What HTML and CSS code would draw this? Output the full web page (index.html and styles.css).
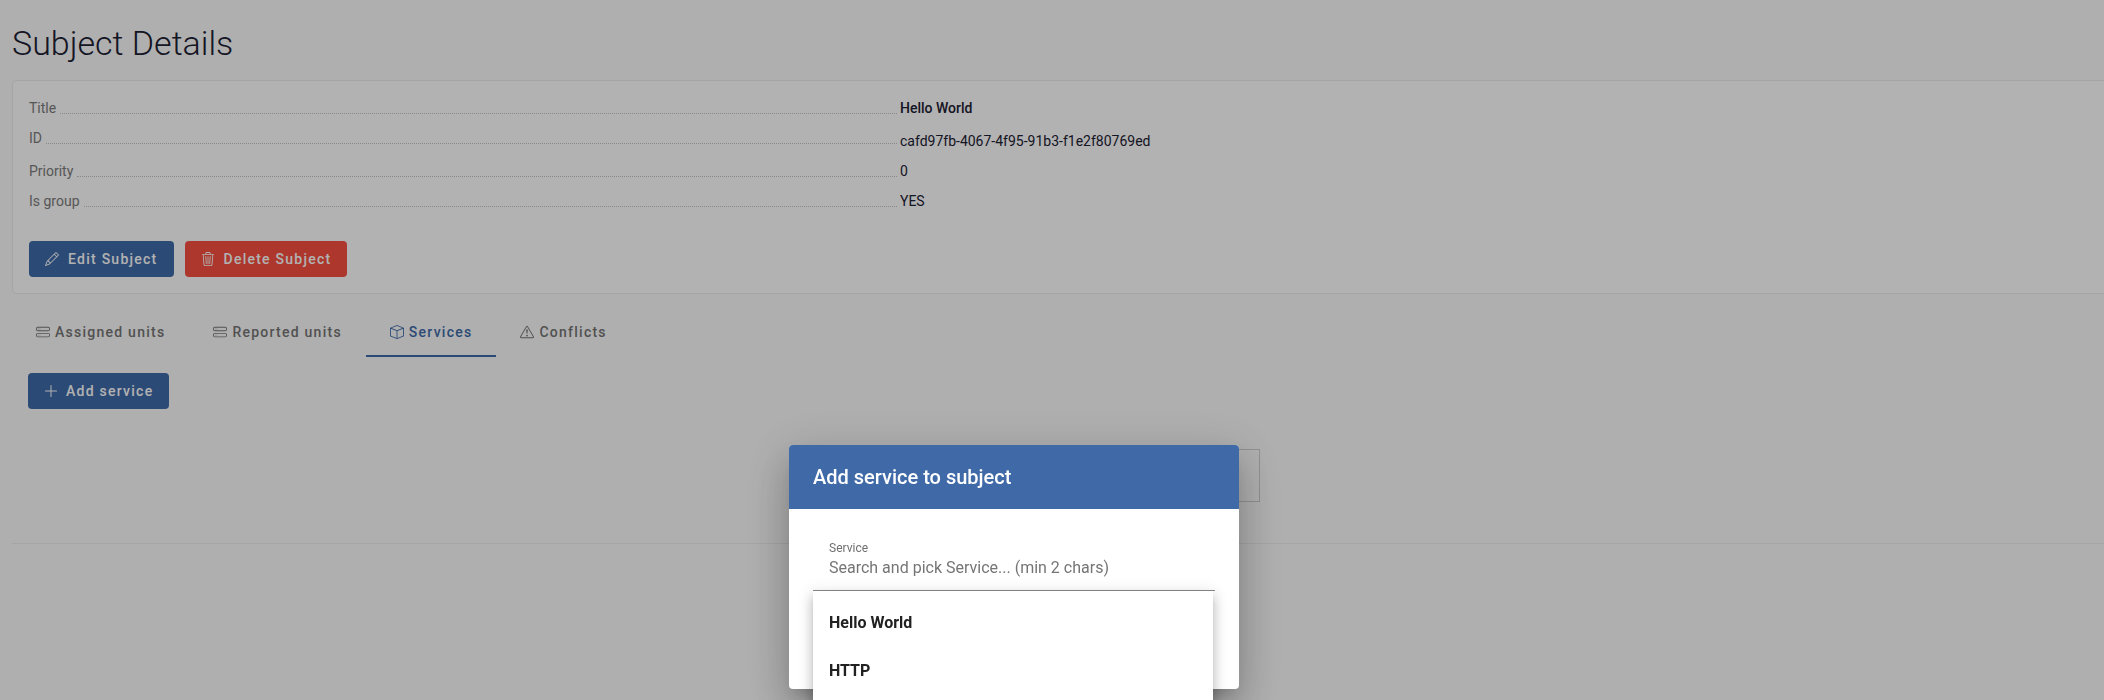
FILE: index.html
```html
<!DOCTYPE html>
<html lang="en">
<head>
<meta charset="utf-8">
<title>Subject Details</title>
<link rel="stylesheet" href="styles.css">
</head>
<body>
<main class="page">
  <h1 class="page-title">Subject Details</h1>
  <section class="card">
    <div class="row"><div class="label"><span>Title</span><i class="leader"></i></div><div class="value strong">Hello World</div></div>
    <div class="row row-tall"><div class="label"><span>ID</span><i class="leader"></i></div><div class="value value-low">cafd97fb-4067-4f95-91b3-f1e2f80769ed</div></div>
    <div class="row"><div class="label"><span>Priority</span><i class="leader"></i></div><div class="value">0</div></div>
    <div class="row"><div class="label"><span>Is group</span><i class="leader"></i></div><div class="value">YES</div></div>
    <div class="actions">
      <button class="btn btn-blue"><svg class="ico" viewBox="0 0 16 16"><path d="M12.146.146a.5.5 0 0 1 .708 0l3 3a.5.5 0 0 1 0 .708l-10 10a.5.5 0 0 1-.168.11l-5 2a.5.5 0 0 1-.65-.65l2-5a.5.5 0 0 1 .11-.168l10-10zM11.207 2.5 13.5 4.793 14.793 3.5 12.5 1.207 11.207 2.5zm1.586 3L10.5 3.207 4 9.707V10h.5a.5.5 0 0 1 .5.5v.5h.5a.5.5 0 0 1 .5.5v.5h.293l6.5-6.5zm-9.761 5.175-.106.106-1.528 3.821 3.821-1.528.106-.106A.5.5 0 0 1 5 12.5V12h-.5a.5.5 0 0 1-.5-.5V11h-.5a.5.5 0 0 1-.468-.325z"/></svg>Edit Subject</button>
      <button class="btn btn-red"><svg class="ico" viewBox="0 0 16 16"><path d="M6.5 1h3a.5.5 0 0 1 .5.5v1H6v-1a.5.5 0 0 1 .5-.5ZM11 2.5v-1A1.5 1.5 0 0 0 9.5 0h-3A1.5 1.5 0 0 0 5 1.5v1H2.506a.58.58 0 0 0-.01 0H1.5a.5.5 0 0 0 0 1h.538l.853 10.66A2 2 0 0 0 4.885 16h6.23a2 2 0 0 0 1.994-1.84l.853-10.66h.538a.5.5 0 0 0 0-1h-.995a.59.59 0 0 0-.01 0H11Zm1.958 1-.846 10.58a1 1 0 0 1-.997.92h-6.23a1 1 0 0 1-.997-.92L3.042 3.5h9.916Zm-7.487 1a.5.5 0 0 1 .528.47l.5 8.5a.5.5 0 0 1-.998.06L5 5.03a.5.5 0 0 1 .47-.53Zm5.058 0a.5.5 0 0 1 .47.53l-.5 8.5a.5.5 0 1 1-.998-.06l.5-8.5a.5.5 0 0 1 .528-.47ZM8 4.5a.5.5 0 0 1 .5.5v8.5a.5.5 0 0 1-1 0V5a.5.5 0 0 1 .5-.5Z"/></svg>Delete Subject</button>
    </div>
  </section>
  <nav class="tabs">
    <a class="tab"><svg class="ico ico-tab" viewBox="0 0 16 16"><path d="M14 10a1 1 0 0 1 1 1v1a1 1 0 0 1-1 1H2a1 1 0 0 1-1-1v-1a1 1 0 0 1 1-1h12zM2 9a2 2 0 0 0-2 2v1a2 2 0 0 0 2 2h12a2 2 0 0 0 2-2v-1a2 2 0 0 0-2-2H2z"/><path d="M5 11.5a.5.5 0 1 1-1 0 .5.5 0 0 1 1 0zm-2 0a.5.5 0 1 1-1 0 .5.5 0 0 1 1 0zM14 3a1 1 0 0 1 1 1v1a1 1 0 0 1-1 1H2a1 1 0 0 1-1-1V4a1 1 0 0 1 1-1h12zM2 2a2 2 0 0 0-2 2v1a2 2 0 0 0 2 2h12a2 2 0 0 0 2-2V4a2 2 0 0 0-2-2H2z"/><path d="M5 4.5a.5.5 0 1 1-1 0 .5.5 0 0 1 1 0zm-2 0a.5.5 0 1 1-1 0 .5.5 0 0 1 1 0z"/></svg>Assigned units</a>
    <a class="tab"><svg class="ico ico-tab" viewBox="0 0 16 16"><path d="M14 10a1 1 0 0 1 1 1v1a1 1 0 0 1-1 1H2a1 1 0 0 1-1-1v-1a1 1 0 0 1 1-1h12zM2 9a2 2 0 0 0-2 2v1a2 2 0 0 0 2 2h12a2 2 0 0 0 2-2v-1a2 2 0 0 0-2-2H2z"/><path d="M5 11.5a.5.5 0 1 1-1 0 .5.5 0 0 1 1 0zm-2 0a.5.5 0 1 1-1 0 .5.5 0 0 1 1 0zM14 3a1 1 0 0 1 1 1v1a1 1 0 0 1-1 1H2a1 1 0 0 1-1-1V4a1 1 0 0 1 1-1h12zM2 2a2 2 0 0 0-2 2v1a2 2 0 0 0 2 2h12a2 2 0 0 0 2-2V4a2 2 0 0 0-2-2H2z"/><path d="M5 4.5a.5.5 0 1 1-1 0 .5.5 0 0 1 1 0zm-2 0a.5.5 0 1 1-1 0 .5.5 0 0 1 1 0z"/></svg>Reported units</a>
    <a class="tab tab-active"><svg class="ico ico-tab" viewBox="0 0 16 16"><path d="M8.186 1.113a.5.5 0 0 0-.372 0L1.846 3.5 8 5.961 14.154 3.5 8.186 1.113zM15 4.239l-6.5 2.6v7.922l6.5-2.6V4.24zM7.5 14.762V6.838L1 4.239v7.925l6.5 2.6zM7.443.184a1.5 1.5 0 0 1 1.114 0l7.129 2.852A.5.5 0 0 1 16 3.5v8.662a1 1 0 0 1-.629.928l-7.185 2.874a.5.5 0 0 1-.372 0L.63 13.09a1 1 0 0 1-.63-.928V3.5a.5.5 0 0 1 .314-.464L7.443.184z"/></svg>Services</a>
    <a class="tab"><svg class="ico ico-tab" viewBox="0 0 16 16"><path d="M7.938 2.016A.13.13 0 0 1 8.002 2a.13.13 0 0 1 .063.016.146.146 0 0 1 .054.057l6.857 11.667c.036.06.035.124.002.183a.163.163 0 0 1-.054.06.116.116 0 0 1-.066.017H1.146a.115.115 0 0 1-.066-.017.163.163 0 0 1-.054-.06.176.176 0 0 1 .002-.183L7.884 2.073a.147.147 0 0 1 .054-.057zm1.044-.45a1.13 1.13 0 0 0-1.96 0L.165 13.233c-.457.778.091 1.767.98 1.767h13.713c.889 0 1.438-.99.98-1.767L8.982 1.566z"/><path d="M7.002 12a1 1 0 1 1 2 0 1 1 0 0 1-2 0zM7.1 5.995a.905.905 0 1 1 1.8 0l-.35 3.507a.552.552 0 0 1-1.1 0L7.1 5.995z"/></svg>Conflicts</a>
  </nav>
  <div class="tab-body">
    <button class="btn btn-blue"><svg class="ico ico-plus" viewBox="0 0 16 16"><path d="M8 2a.5.5 0 0 1 .5.5v5h5a.5.5 0 0 1 0 1h-5v5a.5.5 0 0 1-1 0v-5h-5a.5.5 0 0 1 0-1h5v-5A.5.5 0 0 1 8 2Z"/></svg>Add service</button>
  </div>
  <div class="empty-wrap"><div class="empty-box"></div></div>
  <div class="rule"></div>
</main>
<div class="overlay"></div>
<div class="dialog">
  <header class="dialog-head">Add service to subject</header>
  <div class="dialog-body">
    <div class="field">
      <label class="field-label">Service</label>
      <div class="field-placeholder">Search and pick Service... (min 2 chars)</div>
      <ul class="panel">
        <li class="option">Hello World</li>
        <li class="option">HTTP</li>
      </ul>
    </div>
  </div>
</div>
</body>
</html>
```

FILE: styles.css
```css
* { box-sizing: border-box; }
html, body { margin: 0; height: 100%; overflow: hidden; }
body { background: #fbfbfb; font-family: Roboto, "Liberation Sans", sans-serif; font-size: 14px; color: #1c2033; }
.page { padding-left: 12px; height: 700px; overflow: hidden; }
.page-title { margin: 0; height: 80px; padding-top: 20px; font-size: 34px; line-height: 46px; font-weight: 300; }
.card { margin-right: -12px; height: 214px; padding: 17px 16px 0; background: #fff; border: 1px solid #ededed; border-radius: 4px 0 0 4px; }
.row { display: grid; grid-template-columns: 868px 1fr; column-gap: 3px; height: 30px; line-height: 20px; }
.row-tall { height: 33px; }
.label { display: flex; height: 20px; color: #7c7c7c; }
.leader { flex: 1; height: 16px; margin-left: 4px; border-bottom: 1px dotted #c4c4c4; }
.value-low { padding-top: 3px; }
.strong { font-weight: 500; }
.actions { display: flex; gap: 11px; margin-top: 20px; }
.btn { display: inline-flex; align-items: center; height: 36px; padding: 0 16px; border: 0; border-radius: 4px; color: #fff; font: 500 14px Roboto, sans-serif; letter-spacing: 1.25px; }
.btn-blue { background: #3f6ba9; }
.btn-red { background: #f8503f; }
.ico { width: 14px; height: 14px; margin-right: 9px; fill: currentColor; flex: none; }
.ico-plus { width: 16px; height: 16px; margin: 0 7px 0 -1px; }
.ico-tab { margin-right: 5px; }
.tabs { display: flex; margin-top: 15px; height: 48px; }
.tab { display: flex; align-items: center; padding: 0 24px; border-bottom: 2px solid transparent; color: #757575; font-weight: 500; letter-spacing: 1.25px; }
.tab-active { color: #3f6ba9; border-bottom-color: #3f6ba9; }
.tab-body { display: flex; padding: 16px 16px 0; }
.empty-wrap { display: flex; justify-content: center; margin-top: 40px; }
.empty-box { width: 404px; height: 53px; border: 1px solid #cfcfcf; }
.rule { height: 1px; margin-top: 41px; background: #ececec; }
.overlay { position: fixed; inset: 0; background: rgba(0, 0, 0, .3); }
.dialog { position: fixed; left: 789px; top: 445px; width: 450px; height: 244px; background: #fff; border-radius: 4px; box-shadow: 0 11px 15px -7px rgba(0,0,0,.2), 0 24px 38px 3px rgba(0,0,0,.14), 0 9px 46px 8px rgba(0,0,0,.12); }
.dialog-head { height: 64px; padding: 0 24px; display: flex; align-items: center; background: #3f69a7; color: #fff; font-size: 20px; font-weight: 500; border-radius: 4px 4px 0 0; }
.dialog-body { padding: 24px 24px 0; }
.field { position: relative; height: 58px; padding: 0 16px; border-bottom: 1px solid #8a8a8a; }
.field-label { display: block; font-size: 12px; line-height: 16px; padding-top: 7px; height: 23px; margin-top: 0; color: #6f6f6f; }
.field-placeholder { font-size: 16px; line-height: 24px; color: #757575; }
.panel { position: absolute; left: 0; top: 100%; width: 400px; height: 220px; margin: 1px 0 0; padding: 8px 0 0; list-style: none; background: #fff; box-shadow: 0 5px 5px -3px rgba(0,0,0,.2), 0 8px 10px 1px rgba(0,0,0,.14), 0 3px 14px 2px rgba(0,0,0,.12); }
.option { height: 48px; padding: 0 16px; line-height: 48px; font-size: 16px; font-weight: 700; color: #212121; }
```
